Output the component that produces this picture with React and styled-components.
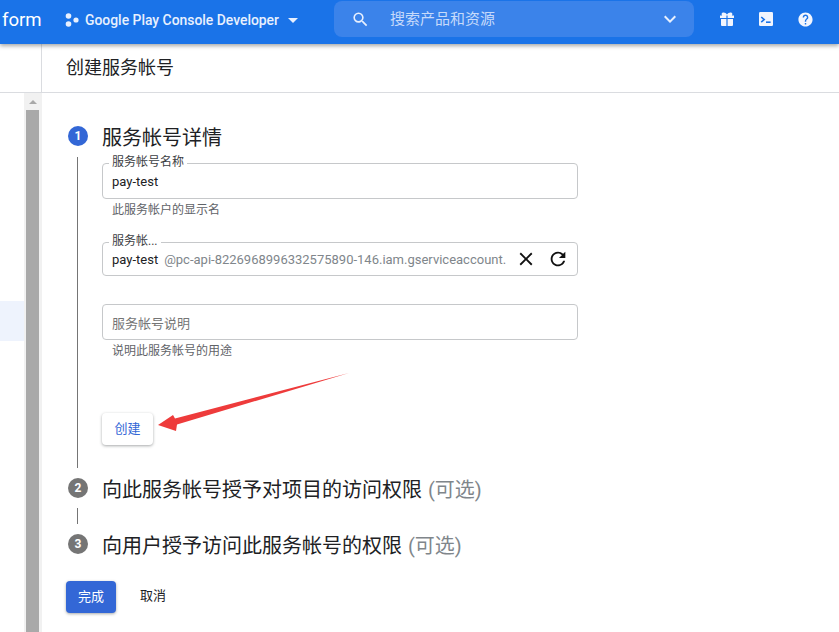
import React from "react";
import styled, { createGlobalStyle } from "styled-components";
import {
  MdArrowDropDown,
  MdClose,
  MdExpandMore,
  MdHelp,
  MdRefresh,
  MdSearch,
} from "react-icons/md";

const GlobalStyle = createGlobalStyle`
  html, body {
    margin: 0;
    padding: 0;
    height: 100%;
    overflow: hidden;
    background: #fff;
  }
  body {
    font-family: Roboto, "Noto Sans CJK SC", sans-serif;
    color: #202124;
  }
`;

const Page = styled.div`
  position: relative;
  width: 839px;
  height: 632px;
  overflow: hidden;
`;

const TopBar = styled.header`
  position: relative;
  z-index: 2;
  display: flex;
  align-items: center;
  height: 44px;
  background: #1a73e8;
  box-shadow: 0 2px 4px rgba(60, 64, 67, 0.45);
  color: #fff;
`;

const Brand = styled.div`
  width: 65px;
  height: 40px;
  margin-top: -4px;
  padding-left: 2px;
  box-sizing: border-box;
  font-size: 18.6px;
  line-height: 40px;
`;

const Project = styled.div`
  display: flex;
  align-items: center;
  width: 269px;
  height: 40px;
  margin-top: -4px;
  font-size: 13.9px;
  font-weight: 500;
  color: #e8f0fe;
`;

const ProjectName = styled.span`
  margin-left: 6px;
`;

const CaretIcon = styled(MdArrowDropDown)`
  margin-left: 2px;
`;

const Search = styled.div`
  display: flex;
  align-items: center;
  width: 360px;
  height: 36px;
  margin-top: -6px;
  padding: 0 12px 0 17px;
  box-sizing: border-box;
  border-radius: 8px;
  background: #3b83ea;
`;

const SearchText = styled.span`
  flex: 1;
  margin-left: 20px;
  padding-bottom: 3px;
  font-size: 15px;
  color: #c6dafa;
`;

const TopActions = styled.div`
  display: flex;
  align-items: center;
  gap: 25px;
  margin-left: 26px;
  margin-top: -6px;
`;

const HelpIcon = styled(MdHelp)`
  margin: 0 -1.5px;
`;

const Body = styled.div`
  display: flex;
  height: 588px;
`;

const Side = styled.aside`
  display: flex;
  flex-direction: column;
  flex: none;
  width: 42px;
`;

const SideHead = styled.div`
  flex: none;
  height: 49px;
  box-sizing: border-box;
  border-right: 1px solid #dadce0;
  border-bottom: 1px solid #dadce0;
`;

const SideBody = styled.div`
  flex: 1;
  display: flex;
`;

const NavColumn = styled.div`
  width: 24px;
  padding-top: 208px;
`;

const ActiveNav = styled.div`
  height: 40px;
  background: #eef3fd;
`;

const ScrollTrack = styled.div`
  display: flex;
  flex-direction: column;
  width: 18px;
  box-sizing: border-box;
  padding: 0 3px 0 2px;
  background: #f1f1f1;
`;

const ScrollArrow = styled.div`
  flex: none;
  height: 17px;
  display: flex;
  align-items: center;
  justify-content: center;

  &::before {
    content: "";
    border-left: 4px solid transparent;
    border-right: 4px solid transparent;
    border-bottom: 4px solid #a8a8a8;
  }
`;

const ScrollThumb = styled.div`
  flex: 1;
  background: #a9a9a9;
`;

const Main = styled.main`
  flex: 1;
`;

const PageTitle = styled.div`
  height: 49px;
  box-sizing: border-box;
  padding: 0 24px;
  border-bottom: 1px solid #dadce0;
  font-size: 18px;
  line-height: 47px;
`;

const Content = styled.div`
  padding: 31px 24px 0;
`;

const StepHead = styled.div`
  display: flex;
  align-items: center;
  height: 24px;
  margin-top: ${(p) => p.$top || 0}px;
  padding-left: 2px;
  font-size: 20px;
`;

const Badge = styled.span`
  flex: none;
  display: flex;
  align-items: center;
  justify-content: center;
  width: 20px;
  height: 20px;
  margin-right: 14px;
  border-radius: 50%;
  background: ${(p) => (p.$active ? "#3367d6" : "#757575")};
  color: #fff;
  font-size: 12px;
  font-weight: 700;
`;

const Hint = styled.span`
  margin-left: 6px;
  color: #80868b;
`;

const StepBody = styled.div`
  height: 305px;
  margin-top: 9px;
  margin-left: 11px;
  padding: 6px 0 0 24px;
  border-left: 1px solid #757575;
`;

const Connector = styled.div`
  margin: 8px 0 8px 11px;
  height: 16px;
  border-left: 1px solid #757575;
`;

const Field = styled.div`
  position: relative;
  display: flex;
  align-items: center;
  width: 476px;
  height: ${(p) => p.$h || 36}px;
  margin-top: ${(p) => p.$top || 0}px;
  padding: 0 9px;
  box-sizing: border-box;
  border: 1px solid #c6c8ca;
  border-radius: 4px;
  font-size: 13px;
  background: #fff;
`;

const FloatLabel = styled.label`
  position: absolute;
  left: 6px;
  top: -9px;
  padding: 0 3px;
  background: #fff;
  font-size: 12px;
  line-height: 14px;
  color: #3c4043;
`;

const Value = styled.span`
  flex: none;
`;

const Suffix = styled.span`
  flex: none;
  margin-left: 6px;
  white-space: nowrap;
  font-size: 13px;
  color: #80868b;
`;

const Placeholder = styled.span`
  color: #757575;
`;

const FieldIcons = styled.div`
  position: absolute;
  right: 8px;
  top: 5px;
  display: flex;
  align-items: center;
  gap: 10px;
  color: #111;
`;

const HelpText = styled.div`
  margin: 4px 0 0 10px;
  height: 14px;
  font-size: 12px;
  line-height: 14px;
  color: #5f6368;
`;

const RaisedButton = styled.button`
  display: block;
  width: ${(p) => p.$w}px;
  height: 32px;
  margin-top: ${(p) => p.$top || 0}px;
  padding: 0 0 3px;
  border: none;
  border-radius: 4px;
  background: ${(p) => (p.$primary ? "#3367d6" : "#fff")};
  color: ${(p) => (p.$primary ? "#fff" : "#3367d6")};
  box-shadow: 0 1px 3px rgba(60, 64, 67, 0.45);
  font-family: inherit;
  font-size: 13px;
`;

const Actions = styled.div`
  display: flex;
  align-items: center;
  margin-top: 25px;
`;

const TextButton = styled.button`
  margin: 0 0 6px 24px;
  padding: 0;
  border: none;
  background: none;
  font-family: inherit;
  font-size: 13px;
  color: #202124;
`;

const ArrowMark = styled.svg`
  position: absolute;
  left: 150px;
  top: 365px;
`;

const ProjectDots = () => (
  <svg width="14" height="14" viewBox="0 0 14 14" fill="#e8f0fe">
    <circle cx="3.5" cy="3" r="2.8" />
    <circle cx="3.5" cy="11" r="2.8" />
    <circle cx="11" cy="7" r="2.6" />
  </svg>
);

const GiftIcon = () => (
  <svg width="14" height="14" viewBox="0 0 14 14" fill="#f1f5fe">
    <path d="M3.6 0.4c1.4 0 2.6 0.9 3.4 2.2 0.8-1.3 2-2.2 3.4-2.2 1.2 0 2 0.7 2 1.6 0 0.5-0.2 1-0.6 1.4H14v2.6H7.6V3.6h-1.2v2.4H0V3.4h2.2C1.8 3 1.6 2.5 1.6 2c0-0.9 0.8-1.6 2-1.6z" />
    <path d="M1 7h5.4v7H2a1 1 0 0 1-1-1V7zM7.6 7H13v6a1 1 0 0 1-1 1H7.6V7z" />
  </svg>
);

const TerminalIcon = () => (
  <svg width="14" height="14" viewBox="0 0 14 14">
    <rect width="14" height="14" rx="1.2" fill="#f1f5fe" />
    <path d="M2.2 5l3 2.6-3 2.6" fill="none" stroke="#1a73e8" strokeWidth="1.6" />
    <rect x="7" y="9.4" width="4.6" height="1.6" fill="#1a73e8" />
  </svg>
);

const App = () => {
  return (
    <Page>
      <GlobalStyle />
      <TopBar>
        <Brand>form</Brand>
        <Project>
          <ProjectDots />
          <ProjectName>Google Play Console Developer</ProjectName>
          <CaretIcon size={24} />
        </Project>
        <Search>
          <MdSearch size={19} color="#e8f0fe" />
          <SearchText>搜索产品和资源</SearchText>
          <MdExpandMore size={24} color="#e8f0fe" />
        </Search>
        <TopActions>
          <GiftIcon />
          <TerminalIcon />
          <HelpIcon size={17} color="#f1f5fe" />
        </TopActions>
      </TopBar>
      <Body>
        <Side>
          <SideHead />
          <SideBody>
            <NavColumn>
              <ActiveNav />
            </NavColumn>
            <ScrollTrack>
              <ScrollArrow />
              <ScrollThumb />
            </ScrollTrack>
          </SideBody>
        </Side>
        <Main>
          <PageTitle>创建服务帐号</PageTitle>
          <Content>
            <StepHead>
              <Badge $active>1</Badge>
              服务帐号详情
            </StepHead>
            <StepBody>
              <Field>
                <FloatLabel>服务帐号名称</FloatLabel>
                <Value>pay-test</Value>
              </Field>
              <HelpText>此服务帐户的显示名</HelpText>
              <Field $h={34} $top={25}>
                <FloatLabel>服务帐...</FloatLabel>
                <Value>pay-test</Value>
                <Suffix>@pc-api-8226968996332575890-146.iam.gserviceaccount.</Suffix>
                <FieldIcons>
                  <MdClose size={22} />
                  <MdRefresh size={22} />
                </FieldIcons>
              </Field>
              <Field $top={28}>
                <Placeholder>服务帐号说明</Placeholder>
              </Field>
              <HelpText>说明此服务帐号的用途</HelpText>
              <RaisedButton $w={51} $top={55}>创建</RaisedButton>
            </StepBody>
            <StepHead $top={8}>
              <Badge>2</Badge>
              向此服务帐号授予对项目的访问权限<Hint>(可选)</Hint>
            </StepHead>
            <Connector />
            <StepHead>
              <Badge>3</Badge>
              向用户授予访问此服务帐号的权限<Hint>(可选)</Hint>
            </StepHead>
            <Actions>
              <RaisedButton $primary $w={50}>完成</RaisedButton>
              <TextButton>取消</TextButton>
            </Actions>
          </Content>
        </Main>
      </Body>
      <ArrowMark width="200" height="70" viewBox="150 365 200 70">
        <path d="M158 425 L173 415 L175 418.5 L349 373 L177 424.5 L176 431 Z" fill="#ee3b3b" />
      </ArrowMark>
    </Page>
  );
};

export default App;
